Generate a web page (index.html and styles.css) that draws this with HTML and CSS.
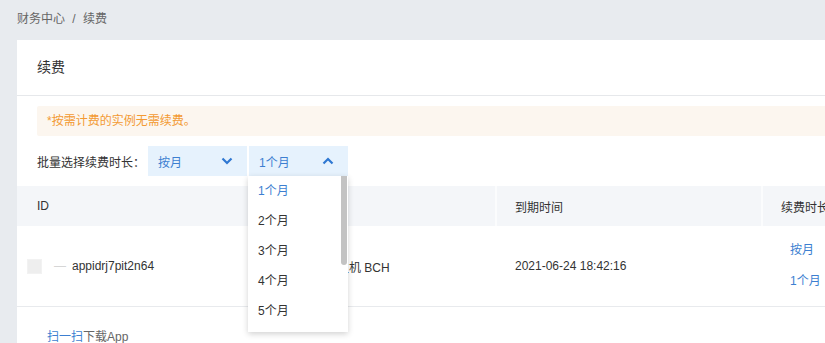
FILE: index.html
```html
<html>
<head>
    <meta charset="UTF-8">
    <title>续费</title>
    <link rel="stylesheet" href="styles.css">
</head>
<body>
<div class="crumb">财务中心 <span class="sep">/</span> 续费</div>
<div class="card">
    <div class="card-head">续费</div>
    <div class="card-body">
        <div class="notice">*按需计费的实例无需续费。</div>
        <div class="batch">
            <span class="batch-label">批量选择续费时长：</span>
            <div class="select">
                <span>按月</span>
                <svg class="arrow" width="12" height="8" viewBox="0 0 12 8"><polyline points="1.5,1.5 6,6 10.5,1.5" fill="none" stroke="#2f78d2" stroke-width="2.2"/></svg>
            </div>
            <div class="select open">
                <span>1个月</span>
                <svg class="arrow" width="12" height="8" viewBox="0 0 12 8"><polyline points="1.5,6.5 6,2 10.5,6.5" fill="none" stroke="#2f78d2" stroke-width="2.2"/></svg>
                <div class="menu">
                    <ul>
                        <li class="active">1个月</li>
                        <li>2个月</li>
                        <li>3个月</li>
                        <li>4个月</li>
                        <li>5个月</li>
                    </ul>
                    <span class="thumb"></span>
                </div>
            </div>
        </div>
    </div>
    <div class="table">
        <div class="tr th">
            <div class="td c1">ID</div>
            <div class="td c2">产品</div>
            <div class="td c3">到期时间</div>
            <div class="td c4">续费时长</div>
        </div>
        <div class="tr row">
            <div class="td c1"><span class="check"></span><span class="dash">—</span>appidrj7pit2n64</div>
            <div class="td c2">区块链云服务主机 BCH</div>
            <div class="td c3">2021-06-24 18:42:16</div>
            <div class="td c4 links"><a>按月</a><a>1个月</a></div>
        </div>
    </div>
    <div class="foot"><a>扫一扫</a>下载App</div>
</div>
</body>
</html>
```

FILE: styles.css
```css
*{
    padding: 0;
    margin: 0;
}
body{
    background-color: #e8ebef;
    font-family: "Liberation Sans", "Noto Sans CJK SC", sans-serif;
    font-size: 12px;
    color: #333;
    overflow: hidden;
    width: 825px;
    height: 343px;
}
.crumb{
    height: 40px;
    line-height: 38px;
    padding-left: 17px;
    color: #666;
}
.crumb .sep{
    margin: 0 4px;
}
.card{
    margin-left: 17px;
    width: 860px;
    background-color: #fff;
    height: 320px;
}
.card-head{
    height: 55px;
    line-height: 55px;
    padding-left: 20px;
    font-size: 14px;
    border-bottom: 1px solid #e6e8eb;
}
.card-body{
    padding: 10px 0 0 20px;
}
.notice{
    height: 30px;
    line-height: 30px;
    padding-left: 10px;
    background-color: #fcf6ef;
    color: #f39a33;
    border-radius: 2px;
}
.batch{
    display: flex;
    align-items: center;
    margin-top: 10px;
    height: 30px;
}
.batch-label{
    width: 111px;
}
.select{
    position: relative;
    display: flex;
    align-items: center;
    justify-content: space-between;
    width: 99px;
    height: 30px;
    padding: 0 10px;
    box-sizing: border-box;
    margin-right: 2px;
    background-color: #e6f2fd;
    color: #3d7fd1;
}
.select .arrow{
    margin-right: 4px;
}
/*下拉列表盖在表格上面*/
.menu{
    position: absolute;
    top: 30px;
    left: -1px;
    width: 100px;
    height: 156px;
    overflow: hidden;
    background-color: #fff;
    box-shadow: 0 2px 6px rgba(0, 0, 0, 0.18);
    z-index: 10;
}
.menu li{
    list-style: none;
    height: 30px;
    line-height: 30px;
    padding-left: 10px;
    color: #333;
}
.menu li.active{
    color: #3d7fd1;
}
/*滚动条*/
.menu .thumb{
    position: absolute;
    top: 0;
    right: 1px;
    width: 6px;
    height: 89px;
    border-radius: 0 0 3px 3px;
    background-color: #c3c3c3;
}
.table{
    margin-top: 10px;
}
.tr{
    display: flex;
}
.th{
    height: 40px;
    background-color: #f4f6f9;
}
.th .td{
    border-right: 2px solid #fbfcfd;
}
.td{
    display: flex;
    align-items: center;
    box-sizing: border-box;
}
.c1{
    width: 233px;
    padding-left: 20px;
}
.c2{
    width: 247px;
    padding-left: 15px;
}
.c3{
    width: 266px;
    padding-left: 18px;
}
.c4{
    width: 114px;
    padding-left: 18px;
}
.row{
    height: 80px;
    border-bottom: 1px solid #e8eaed;
}
.row .c1{
    padding-left: 10px;
}
.check{
    display: inline-block;
    width: 13px;
    height: 13px;
    background-color: #eee;
    border: 1px solid #f2f2f2;
    margin-right: 12px;
}
.dash{
    color: #d6d6d6;
    margin-right: 6px;
}
.links{
    flex-direction: column;
    align-items: flex-start;
    justify-content: center;
    padding-left: 27px;
}
.links a{
    color: #3d7fd1;
    line-height: 31px;
}
.foot{
    padding: 20px 0 0 30px;
    line-height: 20px;
    color: #666;
}
.foot a{
    color: #3d7fd1;
}
```
